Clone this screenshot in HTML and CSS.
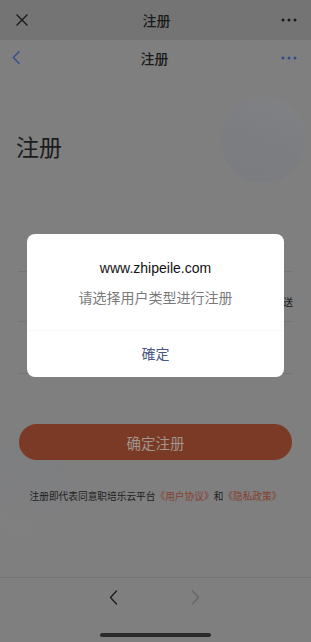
FILE: index.html
```html
<!DOCTYPE html>
<html lang="zh-CN">
<head>
<meta charset="utf-8">
<title>注册</title>
<link rel="stylesheet" href="styles.css">
</head>
<body>
<div class="screen">
  <header class="topbar">
    <svg class="tb-close" width="12" height="12" viewBox="0 0 12 12"><path d="M1 1L11 11M11 1L1 11" stroke="#1b1b1b" stroke-width="1.4" fill="none" stroke-linecap="round"/></svg>
    <div class="tb-title">注册</div>
    <svg class="tb-more" width="16" height="4" viewBox="0 0 16 4"><circle cx="2" cy="2" r="1.5" fill="#1b1b1b"/><circle cx="8" cy="2" r="1.5" fill="#1b1b1b"/><circle cx="14" cy="2" r="1.5" fill="#1b1b1b"/></svg>
  </header>
  <nav class="navbar">
    <svg class="nv-back" width="8" height="13" viewBox="0 0 8 13"><path d="M7 0.8L1.3 6.5L7 12.2" stroke="#2f4c8e" stroke-width="1.3" fill="none" stroke-linecap="round" stroke-linejoin="round"/></svg>
    <div class="tb-title">注册</div>
    <svg class="tb-more" width="16" height="4" viewBox="0 0 16 4"><circle cx="2" cy="2" r="1.5" fill="#2f4c8e"/><circle cx="8" cy="2" r="1.5" fill="#2f4c8e"/><circle cx="14" cy="2" r="1.5" fill="#2f4c8e"/></svg>
  </nav>
  <main class="content">
    <div class="deco deco-top"></div>
    <div class="deco deco-bottom"></div>
    <h1 class="heading">注册</h1>
    <div class="form">
      <div class="row"></div>
      <div class="row"><span class="row-action">发送</span></div>
      <div class="row row-last"></div>
    </div>
    <button class="submit">确定注册</button>
    <p class="agree">注册即代表同意职培乐云平台<span class="link">《用户协议》</span>和<span class="link">《隐私政策》</span></p>
  </main>
  <footer class="toolbar">
    <div class="tool-row">
      <svg width="9" height="15" viewBox="0 0 9 15"><path d="M7.5 1L1.5 7.5L7.5 14" stroke="#1b1b1b" stroke-width="1.3" fill="none" stroke-linecap="round" stroke-linejoin="round"/></svg>
      <svg width="9" height="15" viewBox="0 0 9 15"><path d="M1.5 1L7.5 7.5L1.5 14" stroke="#666666" stroke-width="1.3" fill="none" stroke-linecap="round" stroke-linejoin="round"/></svg>
    </div>
    <div class="home-indicator"></div>
  </footer>

  <div class="dialog">
    <div class="dlg-body">
      <div class="dlg-title">www.zhipeile.com</div>
      <div class="dlg-msg">请选择用户类型进行注册</div>
    </div>
    <div class="dlg-btn">確定</div>
  </div>
</div>
</body>
</html>
```
FILE: styles.css
```css
* { box-sizing: border-box; margin: 0; padding: 0; }
html, body { width: 311px; height: 642px; overflow: hidden; }
body {
  background: #7f7f7f;
  font-family: "Noto Sans CJK SC", "Noto Sans", sans-serif;
  color: #1b1b1b;
}
.screen {
  position: relative;
  width: 311px;
  height: 642px;
  display: flex;
  flex-direction: column;
}
.topbar {
  height: 40px;
  background: #747474;
  display: flex;
  align-items: center;
  justify-content: space-between;
  padding: 0 14px 0 16px;
}
.navbar {
  height: 38px;
  background: #7f7f7f;
  display: flex;
  align-items: center;
  justify-content: space-between;
  padding: 0 14px 3px 12px;
}
.tb-title {
  font-size: 14px;
  font-weight: 500;
  color: #1b1b1b;
  line-height: 20px;
  flex: 1;
  text-align: center;
}
.tb-close, .nv-back, .tb-more { flex: none; }
.tb-close { margin-right: 4px; }
.nv-back { margin-right: 8px; }
.content {
  position: relative;
  flex: 1;
  padding: 0 18px;
  display: flex;
  flex-direction: column;
  overflow: hidden;
}
.deco {
  position: absolute;
  border-radius: 50%;
}
.deco-top {
  left: 220px;
  top: 19px;
  width: 86px;
  height: 86px;
  background: linear-gradient(200deg, #818284 0%, #7c7d81 55%, #7a7c80 100%);
}
.deco-bottom {
  left: -22px;
  top: 364px;
  width: 94px;
  height: 94px;
  background: linear-gradient(20deg, #808080 0%, #7d7e81 100%);
}
.heading {
  position: relative;
  margin-top: 53px;
  margin-left: -2px;
  font-size: 23px;
  line-height: 30px;
  font-weight: 400;
  color: #1b1b1b;
}
.form {
  position: relative;
  margin-top: 61px;
  display: flex;
  flex-direction: column;
}
.row {
  height: 50px;
  border-bottom: 1px solid #747474;
  display: flex;
  align-items: center;
  justify-content: flex-end;
}
.row-last { height: 52px; }
.row-action {
  font-size: 10px;
  color: #1b1b1b;
  padding-top: 10px;
}
.submit {
  position: relative;
  margin: 50px 1px 0;
  height: 36px;
  border: none;
  border-radius: 18px;
  background: #7b3a25;
  color: #a0958f;
  font-family: "Noto Sans CJK SC", sans-serif;
  font-size: 14.5px;
}
.agree {
  position: relative;
  margin-top: 30px;
  text-align: center;
  font-size: 9.7px;
  line-height: 12px;
  color: #1e1e1e;
  white-space: nowrap;
}
.link { color: #86412f; }
.toolbar {
  height: 65px;
  border-top: 1px solid #737373;
  display: flex;
  flex-direction: column;
  align-items: center;
}
.tool-row {
  display: flex;
  gap: 73px;
  margin-top: 12px;
  margin-left: -2px;
}
.home-indicator {
  margin-top: 28px;
  width: 111px;
  height: 4px;
  border-radius: 2px;
  background: #2a2a2a;
}
.dialog {
  position: absolute;
  left: 27px;
  top: 234px;
  width: 257px;
  height: 143px;
  background: #ffffff;
  border-radius: 8px;
  display: flex;
  flex-direction: column;
}
.dlg-body {
  height: 97px;
  border-bottom: 1px solid #f8f8f8;
  display: flex;
  flex-direction: column;
  align-items: center;
  padding-top: 24px;
}
.dlg-title {
  font-family: "Liberation Sans", Arial, sans-serif;
  font-size: 14px;
  line-height: 20px;
  color: #111111;
}
.dlg-msg {
  margin-top: 9px;
  font-size: 14px;
  line-height: 20px;
  color: #7a7a7a;
}
.dlg-btn {
  flex: 1;
  display: flex;
  align-items: center;
  justify-content: center;
  font-size: 14px;
  color: #4a5886;
  padding-bottom: 2px;
}
```
